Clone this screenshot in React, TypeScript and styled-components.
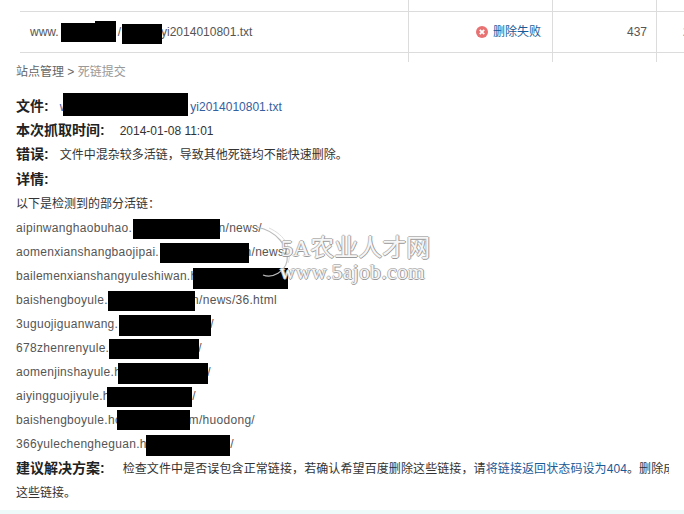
import React from 'react'
import styled, { createGlobalStyle } from 'styled-components'

const GlobalStyle = createGlobalStyle`
    html, body {
        margin: 0;
        padding: 0;
        background: #fff;
    }
`

const Page = styled.div`
    position: relative;
    width: 684px;
    height: 514px;
    overflow: hidden;
    background: #fff;
    font-family: "Liberation Sans", "Noto Sans CJK SC", sans-serif;
    font-size: 12px;
    color: #333;
`

const Table = styled.div`
    margin-left: 20px;
`

const Row = styled.div<{ $height: number; $ruled?: boolean }>`
    display: grid;
    grid-template-columns: 388px 144px 104px 28px;
    height: ${p => p.$height}px;
    box-sizing: border-box;
    border-top: ${p => (p.$ruled ? '1px solid #dcdcdc' : 'none')};
    border-bottom: ${p => (p.$ruled ? '1px solid #dcdcdc' : 'none')};
`

const Cell = styled.div<{ $first?: boolean; $align?: string }>`
    display: flex;
    align-items: center;
    justify-content: ${p => p.$align || 'flex-start'};
    border-left: ${p => (p.$first ? 'none' : '1px solid #dcdcdc')};
    color: #555;
    white-space: nowrap;
    overflow: hidden;
`

const FileCell = styled(Cell)`
    padding-left: 10px;
`

const StatusCell = styled(Cell)`
    padding-left: 67px;
    gap: 5px;
`

const CountCell = styled(Cell)`
    padding-right: 9px;
`

const LastCell = styled(Cell)`
    padding-left: 26px;
`

const StatusText = styled.span`
    color: #1a5a96;
    padding-bottom: 3px;
`

const Spacer = styled.span<{ $w: number }>`
    display: inline-block;
    width: ${p => p.$w}px;
`

const Crumbs = styled.div`
    height: 20px;
    line-height: 20px;
    padding-left: 16px;
    color: #666;
`

const CrumbCurrent = styled.span`
    color: #999;
`

const Content = styled.div`
    margin-top: 12px;
    padding-left: 16px;
    width: 669px;
    box-sizing: border-box;
    overflow: hidden;
`

const Line = styled.div<{ $shift?: number }>`
    height: 24px;
    line-height: 24px;
    margin-top: ${p => p.$shift || 0}px;
    white-space: nowrap;
    overflow: hidden;
`

const Label = styled.strong<{ $gap: number }>`
    display: inline-block;
    font-size: 14px;
    color: #222;
    margin-right: ${p => p.$gap}px;
`

const FileLink = styled.a`
    color: #35609f;
`

const Plain = styled.span`
    color: #333;
`

const Advice = styled(Plain)`
    letter-spacing: 0.1px;
`

const UrlLine = styled(Line)<{ $width: number }>`
    display: flex;
    justify-content: space-between;
    width: ${p => p.$width}px;
    color: #555;
    letter-spacing: 0.3px;
`

const Action = styled.span`
    color: #1a5a96;
`

const Band = styled.div`
    margin-top: 5px;
    height: 4px;
    background: #eef9f9;
`

const Blob = styled.div<{ $x: number; $y: number; $w: number; $h: number }>`
    position: absolute;
    left: ${p => p.$x}px;
    top: ${p => p.$y}px;
    width: ${p => p.$w}px;
    height: ${p => p.$h}px;
    background: #000;
`

const Watermark = styled.div`
    position: absolute;
    left: 255px;
    top: 225px;
    width: 185px;
    height: 60px;
    pointer-events: none;
    font-family: "Liberation Serif", "Noto Sans CJK SC", serif;
    color: #f6f6f6;
    text-shadow: 1px 0 0 #999, -1px 0 0 #bbb, 0 1px 0 #999, 0 -1px 0 #bbb;
`

const Swoosh = styled.svg`
    position: absolute;
    left: 0;
    top: 0;
`

const MarkTitle = styled.div`
    position: absolute;
    left: 26px;
    top: 11px;
    font-size: 24px;
    line-height: 24px;
    white-space: nowrap;
`

const MarkUrl = styled.div`
    position: absolute;
    left: 25px;
    top: 36px;
    font-size: 21px;
    line-height: 22px;
    letter-spacing: 0.6px;
    white-space: nowrap;
`

const FailIcon = () => (
    <svg width="12" height="12" viewBox="0 0 12 12">
        <circle cx="6" cy="6" r="6" fill="#e87272" />
        <path d="M3.8 3.8l4.4 4.4M8.2 3.8L3.8 8.2" stroke="#fff" strokeWidth="1.8" />
    </svg>
)

// end = where the visible tail of the url stops, measured from the line start
const urls = [
    { head: 'aipinwanghaobuhao.', tail: 'n/news/', end: 246 },
    { head: 'aomenxianshangbaojipai.', tail: 'n/news/', end: 272 },
    { head: 'bailemenxianshangyuleshiwan.h', tail: '', end: 260 },
    { head: 'baishengboyule.', tail: 'n/news/36.html', end: 261 },
    { head: '3uguojiguanwang.', tail: '/', end: 198 },
    { head: '678zhenrenyule.h', tail: '/', end: 186 },
    { head: 'aomenjinshayule.h', tail: '/', end: 195 },
    { head: 'aiyingguojiyule.h', tail: '/', end: 180 },
    { head: 'baishengboyule.ho', tail: 'm/huodong/', end: 239 },
    { head: '366yulechengheguan.h', tail: '/', end: 218 },
]

const blobs = [
    { x: 61, y: 23, w: 55, h: 19 },
    { x: 95, y: 21, w: 21, h: 6 },
    { x: 122, y: 24, w: 40, h: 20 },
    { x: 63, y: 93, w: 125, h: 23 },
    { x: 133, y: 219, w: 87, h: 20 },
    { x: 160, y: 243, w: 89, h: 20 },
    { x: 193, y: 268, w: 95, h: 21 },
    { x: 108, y: 291, w: 87, h: 20 },
    { x: 119, y: 315, w: 92, h: 21 },
    { x: 109, y: 339, w: 90, h: 20 },
    { x: 118, y: 363, w: 90, h: 21 },
    { x: 107, y: 387, w: 85, h: 20 },
    { x: 117, y: 410, w: 73, h: 20 },
    { x: 146, y: 435, w: 84, h: 21 },
]

const App = () => {
    return (
        <Page>
            <GlobalStyle />
            <Table>
                <Row $height={11}>
                    <Cell $first />
                    <Cell />
                    <Cell />
                    <Cell />
                </Row>
                <Row $height={42} $ruled>
                    <FileCell $first>
                        www.
                        <Spacer $w={59} />/<Spacer $w={40} />
                        yi2014010801.txt
                    </FileCell>
                    <StatusCell>
                        <FailIcon />
                        <StatusText>删除失败</StatusText>
                    </StatusCell>
                    <CountCell $align="flex-end">437</CountCell>
                    <LastCell>2</LastCell>
                </Row>
                <Row $height={9}>
                    <Cell $first />
                    <Cell />
                    <Cell />
                    <Cell />
                </Row>
            </Table>
            <Crumbs>
                站点管理 &gt; <CrumbCurrent>死链提交</CrumbCurrent>
            </Crumbs>
            <Content>
                <Line>
                    <Label $gap={11}>文件:</Label>
                    <FileLink>
                        w<Spacer $w={122} />
                        yi2014010801.txt
                    </FileLink>
                </Line>
                <Line>
                    <Label $gap={15}>本次抓取时间:</Label>
                    <Plain>2014-01-08 11:01</Plain>
                </Line>
                <Line>
                    <Label $gap={11}>错误:</Label>
                    <Plain>文件中混杂较多活链，导致其他死链均不能快速删除。</Plain>
                </Line>
                <Line $shift={1}>
                    <Label $gap={0}>详情:</Label>
                </Line>
                <Line $shift={1}>
                    <Plain>以下是检测到的部分活链：</Plain>
                </Line>
                {urls.map(url => (
                    <UrlLine key={url.head} $width={url.end}>
                        <span>{url.head}</span>
                        <span>{url.tail}</span>
                    </UrlLine>
                ))}
                <Line>
                    <Label $gap={18}>建议解决方案:</Label>
                    <Advice>
                        检查文件中是否误包含正常链接，若确认希望百度删除这些链接，请
                        <Action>将链接返回状态码设为404</Action>。删除成功
                    </Advice>
                </Line>
                <Line $shift={1}>
                    <Plain>这些链接。</Plain>
                </Line>
            </Content>
            <Band />
            {blobs.map(b => (
                <Blob key={`${b.x}-${b.y}`} $x={b.x} $y={b.y} $w={b.w} $h={b.h} />
            ))}
            <Watermark>
                <Swoosh width="60" height="60" viewBox="0 0 60 60" fill="none">
                    <path d="M2 2C22 6 34 22 32 36C30 46 18 54 8 50" stroke="#bbb" strokeWidth="1.2" />
                    <path d="M14 3C30 10 38 24 33 38" stroke="#ddd" strokeWidth="1" />
                </Swoosh>
                <MarkTitle>5A农业人才网</MarkTitle>
                <MarkUrl>www.5ajob.com</MarkUrl>
            </Watermark>
        </Page>
    )
}

export default App
